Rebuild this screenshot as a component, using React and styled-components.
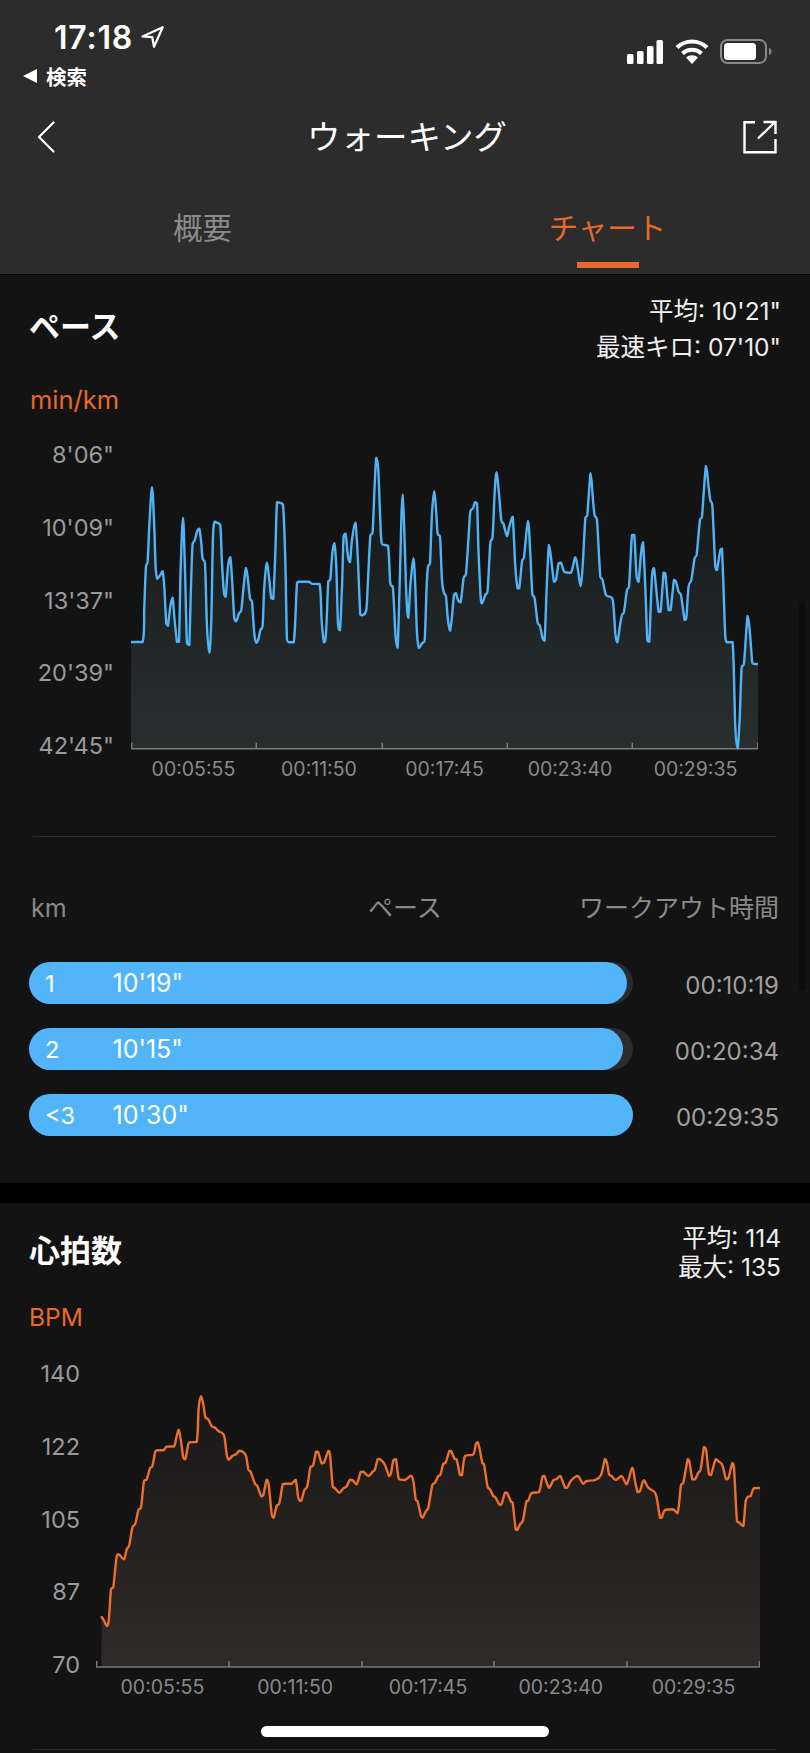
import React from "react"
import styled, { createGlobalStyle } from "styled-components"

const GlobalStyle = createGlobalStyle`
  html, body {
    margin: 0;
    padding: 0;
    background: #000;
  }
  * {
    box-sizing: border-box;
  }
`

const ORANGE = "#e9692a"
const BLUE = "#52b5fa"

const Page = styled.div`
  position: relative;
  width: 810px;
  height: 1753px;
  overflow: hidden;
  background: #000;
  color: #fff;
  font-family: Inter, "Noto Sans CJK JP", sans-serif;
`

const TopBar = styled.header`
  height: 274px;
  background: #2c2c2c;
`

const StatusBar = styled.div`
  height: 110px;
  display: flex;
  justify-content: space-between;
  align-items: flex-start;
  padding: 21px 38px 0 23px;
`

const StatusLeft = styled.div`
  display: flex;
  flex-direction: column;
`

const Clock = styled.div`
  display: flex;
  align-items: center;
  gap: 8px;
  padding-left: 31px;
  height: 32px;
  font-size: 32px;
  font-weight: 600;
  letter-spacing: 0.8px;
`

const BackLink = styled.div`
  display: flex;
  align-items: center;
  gap: 9px;
  height: 30px;
  margin-top: 8px;
  font-size: 20.5px;
  font-weight: 700;
`

const StatusIcons = styled.div`
  display: flex;
  align-items: center;
  gap: 11.5px;
  margin-top: 18px;
`

const NavRow = styled.div`
  height: 54px;
  padding: 0 33px 0 37px;
  display: grid;
  grid-template-columns: 1fr auto 1fr;
  align-items: center;
  & > :last-child {
    justify-self: end;
  }
`

const NavTitle = styled.h1`
  margin: 0;
  font-size: 33.5px;
  font-weight: 400;
  line-height: 44px;
`

const Tabs = styled.nav`
  display: grid;
  grid-template-columns: 1fr 1fr;
  margin-top: 32px;
`

const Tab = styled.div`
  position: relative;
  height: 78px;
  padding-top: 12px;
  text-align: center;
  font-size: 29.5px;
  line-height: 40px;
  color: ${(p) => (p.$active ? ORANGE : "#8a8a8a")};
  &::after {
    content: "";
    display: ${(p) => (p.$active ? "block" : "none")};
    position: absolute;
    left: 50%;
    bottom: 6px;
    width: 62px;
    height: 6px;
    margin-left: -31px;
    background: ${ORANGE};
  }
`

const Section = styled.section`
  background: #131313;
  margin-top: ${(p) => p.$gap}px;
  padding-bottom: ${(p) => p.$bottom}px;
`

const SectionHead = styled.div`
  display: flex;
  justify-content: space-between;
  align-items: center;
  padding: ${(p) => p.$top}px 29px 0 29px;
`

const SectionTitle = styled.h2`
  margin: 0 0 4px;
  font-size: 31px;
  font-weight: 700;
  line-height: 40px;
`

const Summary = styled.div`
  text-align: right;
  font-size: 24.5px;
  line-height: ${(p) => p.$line}px;
  color: #f0f0f0;
`

const Unit = styled.div`
  padding-left: ${(p) => p.$left}px;
  margin-top: ${(p) => p.$gap}px;
  font-size: ${(p) => p.$size}px;
  line-height: 30px;
  color: ${ORANGE};
`

const Chart = styled.div`
  display: grid;
  grid-template-columns: ${(p) => p.$axis}px ${(p) => p.$plot}px;
  column-gap: ${(p) => p.$between}px;
  margin-top: ${(p) => p.$gap}px;
`

const YAxis = styled.div`
  display: flex;
  flex-direction: column;
  gap: 42.75px;
  text-align: right;
  font-size: 23.5px;
  line-height: 30px;
  color: #9a9a9a;
`

const Plot = styled.svg`
  display: block;
  width: 100%;
  height: 310px;
`

const XAxis = styled.div`
  display: grid;
  grid-template-columns: repeat(5, 1fr);
  margin-top: ${(p) => p.$gap}px;
  text-align: center;
  font-size: 19.5px;
  line-height: 30px;
  color: #8a8a8a;
`

const Divider = styled.div`
  height: 1px;
  margin: ${(p) => p.$gap}px 33px 0;
  background: #2a2a2a;
`

const TableHead = styled.div`
  display: grid;
  grid-template-columns: 1fr auto 1fr;
  margin-top: 56px;
  padding: 0 31px 0 31px;
  font-size: 25px;
  line-height: 30px;
  color: #8a8a8a;
  & > :last-child {
    text-align: right;
  }
`

const Rows = styled.div`
  display: flex;
  flex-direction: column;
  gap: 24px;
  margin-top: 39px;
  padding: 0 31px 0 29px;
`

const Row = styled.div`
  display: flex;
  justify-content: space-between;
  align-items: center;
`

const Track = styled.div`
  width: 604px;
  height: 42px;
  border-radius: 21px;
  background: #2c2c2c;
`

const Fill = styled.div`
  display: flex;
  align-items: center;
  height: 100%;
  border-radius: 21px;
  background: ${BLUE};
  padding-left: 16px;
  font-size: 25px;
  color: #fff;
`

const Km = styled.span`
  width: 67.5px;
  font-size: 23.5px;
`

const Duration = styled.span`
  padding-top: 5px;
  font-size: 24px;
  color: #a0a0a0;
`

const ScrollBar = styled.div`
  position: absolute;
  left: 799px;
  top: 603px;
  width: 6px;
  height: 388px;
  border-radius: 3px;
  background: #0c0c0c;
`

const HomeBar = styled.div`
  position: absolute;
  left: 261px;
  top: 1726px;
  width: 288px;
  height: 11px;
  border-radius: 6px;
  background: #fff;
`

// points read off the chart, in 3x crop coordinates
const PACE_LEFT = [392,666,427,666,432,560,437,440,442,425,448,300,455,202,461,300,466,440,471,476,480,465,487,454,492,500,498,610,503,617,510,560,517,533,523,600,530,665,536,665,541,450,548,293,554,450,560,670,567,675,572,500,577,372,583,362,590,335,597,326,603,370,607,415,614,430,620,620,627,698,633,600,638,350,643,305,650,308,660,316,665,430,671,520,676,530,683,440,690,412,696,490,702,595,708,604,716,580,723,570,730,500,737,444,743,480,749,535,755,545,762,640,768,668,775,655,780,630,787,618,792,500,800,428,807,480,813,535,819,537,825,400,830,247,838,248,848,254,855,420,860,660,866,667,880,667,885,600,890,490,896,485,925,485,935,491,958,492,964,600,971,667,977,640,984,485,990,478,996,400,1002,370,1008,440,1013,610,1019,631,1025,500,1030,350,1036,341,1043,410,1049,426,1055,360,1065,308,1072,400,1080,584,1086,586,1098,570,1103,480,1110,350,1117,335,1123,200,1128,114,1134,150,1140,300,1145,372,1163,378,1170,490,1178,505,1186,650,1192,683,1198,500,1207,224]
const PACE_RIGHT = [3,520,9,593,15,500,24,415,30,500,35,640,41,684,50,670,58,662,64,500,68,440,74,430,80,280,87,214,93,280,97,340,104,350,110,480,116,518,122,530,128,600,134,632,140,590,146,525,152,520,158,540,166,547,175,475,182,460,190,350,195,275,203,265,209,247,215,250,220,400,226,530,230,550,240,525,247,513,255,370,262,350,268,220,274,157,281,220,288,300,295,312,305,348,312,320,322,290,330,440,337,505,342,505,350,425,356,412,368,303,375,400,381,520,388,535,397,607,404,618,412,655,418,662,425,480,431,375,438,420,446,485,452,480,460,430,467,428,477,455,497,458,510,412,518,450,526,498,532,440,540,295,546,285,556,160,563,240,568,285,575,300,585,470,592,480,602,525,622,538,630,640,636,667,645,610,650,585,656,575,665,510,671,500,680,345,687,345,694,470,700,485,707,400,713,367,720,500,726,660,732,665,740,470,746,445,752,500,760,575,766,575,775,458,780,460,790,570,796,570,806,480,812,485,820,515,827,525,838,600,843,595,850,500,858,480,868,415,874,405,884,300,890,290,902,138,910,200,915,240,921,255,930,440,935,450,945,390,950,386,960,650,965,667,982,667,990,920,997,985,1003,900,1009,745,1016,730,1027,588,1034,640,1041,728,1047,732,1059,732]
const HEART_LEFT = [305,828,313,840,320,855,326,840,333,745,340,738,350,645,356,640,372,655,380,625,388,612,397,560,406,548,415,508,423,500,432,420,440,415,450,382,457,376,466,332,472,328,490,328,500,317,522,316,529,290,536,266,543,300,550,350,556,355,565,310,570,304,590,303,596,200,603,166,610,190,616,228,625,235,635,255,645,260,655,270,672,283,680,340,686,356,697,345,708,340,718,329,728,332,738,345,745,385,752,393,765,428,772,435,784,466,790,462,800,416,806,430,815,520,821,530,830,495,838,487,848,430,855,428,875,428,887,416,895,470,903,480,913,448,922,435,931,380,940,372,948,332,954,332,965,367,972,365,985,330,990,340,998,435,1005,442,1018,455,1030,442,1040,436,1050,416,1058,418,1070,430,1082,393,1090,392,1105,405,1118,392,1125,385,1133,355,1140,355,1154,370,1167,405,1172,400,1180,358,1188,355,1197,415,1215,417]
const HEART_RIGHT = [18,404,25,420,32,475,38,482,48,525,53,530,63,510,70,500,82,432,90,425,100,405,106,402,115,368,122,365,133,330,138,330,148,352,155,356,165,402,171,402,180,345,205,340,212,310,218,304,224,325,232,365,237,370,248,438,255,445,265,465,272,470,284,492,290,488,300,455,306,455,318,482,323,485,332,565,337,567,345,550,354,538,364,482,370,478,380,456,402,453,412,408,418,404,425,425,433,440,445,418,455,414,466,405,480,440,487,440,497,420,515,405,522,408,534,428,545,420,570,417,588,402,600,354,607,370,612,400,620,405,632,417,650,405,665,430,682,380,690,420,698,454,705,450,716,418,730,440,750,455,757,480,765,530,770,530,780,507,805,505,817,517,822,490,828,432,835,425,848,355,853,360,862,415,870,415,880,395,887,385,897,318,903,325,912,400,918,402,932,355,942,362,952,372,963,415,970,412,982,367,987,380,996,540,1003,545,1015,555,1022,480,1030,467,1037,465,1046,442,1065,441]

const toPage = (flat, ox, oy) => {
  const out = []
  for (let i = 0; i < flat.length; i += 2) {
    out.push([ox + flat[i] / 3, oy + flat[i + 1] / 3])
  }
  return out
}

// catmull-rom, control points held inside each segment's y range so nothing overshoots
const smooth = (pts) => {
  const f = (n) => n.toFixed(1)
  const k = 0.16
  let d = `M${f(pts[0][0])} ${f(pts[0][1])}`
  for (let i = 0; i < pts.length - 1; i++) {
    const p0 = pts[i - 1] || pts[i]
    const p1 = pts[i]
    const p2 = pts[i + 1]
    const p3 = pts[i + 2] || p2
    const lo = Math.min(p1[1], p2[1])
    const hi = Math.max(p1[1], p2[1])
    const clamp = (y) => Math.min(hi, Math.max(lo, y))
    d += `C${f(p1[0] + (p2[0] - p0[0]) * k)} ${f(clamp(p1[1] + (p2[1] - p0[1]) * k))} ${f(p2[0] - (p3[0] - p1[0]) * k)} ${f(clamp(p2[1] - (p3[1] - p1[1]) * k))} ${f(p2[0])} ${f(p2[1])}`
  }
  return d
}

const LineChart = ({ id, points, color, fillTop, fillBottom, box, fillFrom, axisY, ticks }) => {
  const [x, y, w, h] = box
  const line = smooth(points)
  const first = points[0]
  const last = points[points.length - 1]
  return (
    <Plot viewBox={`${x} ${y} ${w} ${h}`}>
      <defs>
        <linearGradient id={id} x1="0" y1="0" x2="0" y2="1">
          <stop offset="0" stopColor={fillTop} />
          <stop offset="1" stopColor={fillBottom} />
        </linearGradient>
      </defs>
      <path d={`${line}L${last[0]} ${axisY}L${fillFrom} ${axisY}L${first[0]} ${first[1]}Z`} fill={`url(#${id})`} />
      <path d={`M${x} ${axisY}H${x + w}`} stroke="#7a7a7a" strokeWidth="1.5" />
      {ticks.map((t) => (
        <path key={t} d={`M${t} ${axisY}v-6`} stroke="#7a7a7a" strokeWidth="1.5" />
      ))}
      <path d={line} fill="none" stroke={color} strokeWidth="2.4" strokeLinejoin="round" strokeLinecap="round" />
    </Plot>
  )
}

const TIMES = ["00:05:55", "00:11:50", "00:17:45", "00:23:40", "00:29:35"]

const LAPS = [
  { km: "1", pace: "10'19\"", time: "00:10:19", width: 597.5 },
  { km: "2", pace: "10'15\"", time: "00:20:34", width: 594 },
  { km: "<3", pace: "10'30\"", time: "00:29:35", width: 604 },
]

const Arrow = () => (
  <svg width="23" height="22" viewBox="0 0 23 22" fill="none" stroke="#fff" strokeWidth="2.2" strokeLinejoin="round">
    <path d="M21.700 1.200 1.500 10.500l9.800.7 1.700 9.500z" />
  </svg>
)

const Signal = () => (
  <svg width="36" height="24" viewBox="0 0 36 24" fill="#fff">
    <rect x="0" y="14" width="6.500" height="10" rx="1.500" />
    <rect x="10" y="11" width="6.500" height="13" rx="1.500" />
    <rect x="20" y="6" width="6.500" height="18" rx="1.500" />
    <rect x="29.500" y="0" width="6.500" height="24" rx="1.500" />
  </svg>
)

const Wifi = () => (
  <svg width="34" height="25" viewBox="0 0 34 25" fill="none" stroke="#fff" strokeWidth="4.200">
    <path d="M2 8.500C10.500 0.500 23.500 0.500 32 8.500" />
    <path d="M7.500 14.500C13 9.500 21 9.500 26.500 14.500" />
    <path d="M17 25l-6-6.500c3.500-3 8.500-3 12 0z" fill="#fff" stroke="none" />
  </svg>
)

const Battery = () => (
  <svg width="52" height="25" viewBox="0 0 52 25">
    <rect x="1" y="1" width="45" height="23" rx="6.500" fill="none" stroke="#8a8a8a" strokeWidth="2" />
    <rect x="4" y="4" width="32" height="17" rx="3.500" fill="#fff" />
    <path d="M49 9c1.500.5 2.500 2 2.500 3.500S50.500 15.500 49 16z" fill="#8a8a8a" />
  </svg>
)

const Chevron = () => (
  <svg width="18" height="32" viewBox="0 0 18 32" fill="none" stroke="#fff" strokeWidth="2.200" strokeLinecap="round" strokeLinejoin="round">
    <path d="M16.500 1.500 2 16l14.500 14.500" />
  </svg>
)

const Share = () => (
  <svg width="34" height="34" viewBox="0 0 34 34" fill="none" stroke="#fff" strokeWidth="2.400">
    <path d="M12 2.200H1.500v30h31V19" />
    <path d="M15 18.500 32 2M20.500 2h12V14" />
  </svg>
)

const BackTriangle = styled.span`
  width: 0;
  height: 0;
  border-style: solid;
  border-width: 7px 14px 7px 0;
  border-color: transparent #fff transparent transparent;
`

export default function App() {
  return (
    <Page>
      <GlobalStyle />
      <TopBar>
        <StatusBar>
          <StatusLeft>
            <Clock>17:18<Arrow /></Clock>
            <BackLink><BackTriangle />検索</BackLink>
          </StatusLeft>
          <StatusIcons>
            <Signal />
            <Wifi />
            <Battery />
          </StatusIcons>
        </StatusBar>
        <NavRow>
          <Chevron />
          <NavTitle>ウォーキング</NavTitle>
          <Share />
        </NavRow>
        <Tabs>
          <Tab>概要</Tab>
          <Tab $active>チャート</Tab>
        </Tabs>
      </TopBar>

      <Section $gap={1} $bottom={47}>
        <SectionHead $top={18}>
          <SectionTitle>ペース</SectionTitle>
          <Summary $line={36}>
            <div>平均: 10'21"</div>
            <div>最速キロ: 07'10"</div>
          </Summary>
        </SectionHead>
        <Unit $gap={20} $left={30} $size={25.5}>min/km</Unit>
        <Chart $axis={114} $plot={627.6} $between={16.7} $gap={25}>
          <YAxis>
            {["8'06\"", "10'09\"", "13'37\"", "20'39\"", "42'45\""].map((l) => (
              <span key={l}>{l}</span>
            ))}
          </YAxis>
          <div>
            <LineChart
              id="pace"
              points={[...toPage(PACE_LEFT, 0, 420), ...toPage(PACE_RIGHT, 405, 420)]}
              color="#4fb3f6"
              fillTop="#151717"
              fillBottom="#292f2f"
              box={[130.7, 440, 627.6, 310]}
              fillFrom={130.7}
              axisY={748.8}
              ticks={[131.4, 256, 382, 507, 632, 757.500]}
            />
            <XAxis $gap={4}>{TIMES.map((t) => <span key={t}>{t}</span>)}</XAxis>
          </div>
        </Chart>
        <Divider $gap={52} />
        <TableHead>
          <span>km</span>
          <span>ペース</span>
          <span>ワークアウト時間</span>
        </TableHead>
        <Rows>
          {LAPS.map((lap) => (
            <Row key={lap.km}>
              <Track>
                <Fill style={{ width: lap.width }}>
                  <Km>{lap.km}</Km>
                  {lap.pace}
                </Fill>
              </Track>
              <Duration>{lap.time}</Duration>
            </Row>
          ))}
        </Rows>
      </Section>

      <Section $gap={20} $bottom={10}>
        <SectionHead $top={21}>
          <SectionTitle>心拍数</SectionTitle>
          <Summary $line={29}>
            <div>平均: 114</div>
            <div>最大: 135</div>
          </Summary>
        </SectionHead>
        <Unit $gap={20} $left={29} $size={24.5}>BPM</Unit>
        <Chart $axis={80} $plot={664} $between={16} $gap={27}>
          <YAxis>
            {["140", "122", "105", "87", "70"].map((l) => (
              <span key={l}>{l}</span>
            ))}
          </YAxis>
          <div>
            <LineChart
              id="heart"
              points={[...toPage(HEART_LEFT, 0, 1340), ...toPage(HEART_RIGHT, 405, 1340)]}
              color="#ee6f28"
              fillTop="#191717"
              fillBottom="#302b2b"
              box={[96, 1358, 664, 310]}
              fillFrom={101.500}
              axisY={1666}
              ticks={[96.700, 229, 362, 494, 627, 759.500]}
            />
            <XAxis $gap={3}>{TIMES.map((t) => <span key={t}>{t}</span>)}</XAxis>
          </div>
        </Chart>
        <Divider $gap={47} />
      </Section>

      <ScrollBar />
      <HomeBar />
    </Page>
  )
}
